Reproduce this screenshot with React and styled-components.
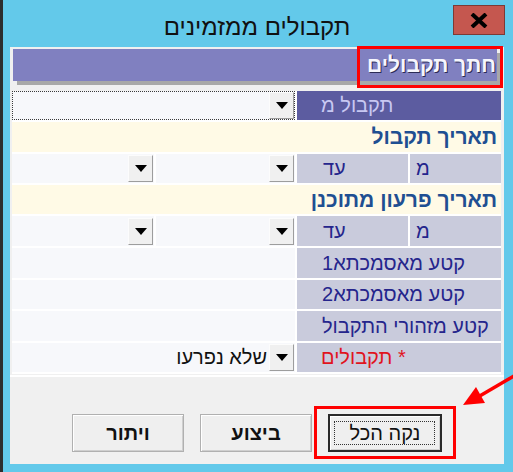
import React from "react";
import styled, { createGlobalStyle } from "styled-components";

const GlobalStyle = createGlobalStyle`
  html, body {
    margin: 0;
    padding: 0;
  }
  body {
    font-family: "Liberation Sans", "DejaVu Sans", sans-serif;
  }
`;

// window frame
const Window = styled.div`
  position: relative;
  width: 513px;
  height: 472px;
  box-sizing: border-box;
  background: #63c9ea;
  border-left: 3px solid #2d2d2d;
  padding: 0 9px 8px 7px;
  display: flex;
  flex-direction: column;
  direction: rtl;
  overflow: hidden;
`;

const TitleBar = styled.div`
  height: 47px;
  display: grid;
  grid-template-columns: 1fr auto 1fr;
  align-items: start;
`;

const CloseButton = styled.div`
  justify-self: start;
  margin: 5px -1px 0 0;
  width: 50px;
  height: 28px;
  background: #c5574f;
  border: 1px solid #7d3a35;
  display: flex;
  align-items: center;
  justify-content: center;
`;

const Title = styled.div`
  margin-top: 12px;
  font-size: 24px;
  line-height: 30px;
  color: #111;
  white-space: nowrap;
`;

const Client = styled.div`
  flex: 1;
  background: #f0f0f0;
  display: flex;
  flex-direction: column;
`;

const HeaderBar = styled.div`
  margin: 2px 7px 0 3px;
  height: 32px;
  background: #8080c0;
  box-shadow: 4px 4px 0 #a8a8a8;
  color: #f6f6fd;
  font-weight: bold;
  font-size: 21px;
  line-height: 32px;
  padding-right: 1px;
  text-shadow: 1px 1px 0 #2b2b55;
`;

const Form = styled.div`
  margin: 10px 3px 0 2px;
  display: grid;
  grid-template-rows: 31px 32px 31px 31px 32px 32px 31px 32px 31px;
  background: #fff;
`;

const Row = styled.div`
  display: flex;
  gap: 2px;
  padding-bottom: 2px;
  min-height: 0;
`;

const Label = styled.div`
  width: ${(p) => p.$w}px;
  flex-shrink: 0;
  box-sizing: border-box;
  background: ${(p) => (p.$tone === "purple" ? "#5c5ca0" : "#c9cbdc")};
  color: ${(p) => p.$color || (p.$tone === "purple" ? "#c8c8f2" : "#25258c")};
  font-size: 20px;
  padding-left: ${(p) => p.$pl}px;
  display: flex;
  align-items: center;
  justify-content: flex-end;
  white-space: nowrap;
`;

const SectionTitle = styled.div`
  flex: 1;
  background: #fffae6;
  color: #1f4f92;
  font-weight: bold;
  font-size: 21px;
  padding-right: 4px;
  display: flex;
  align-items: center;
`;

const Field = styled.div`
  width: ${(p) => (p.$w ? `${p.$w}px` : "auto")};
  flex: ${(p) => (p.$w ? "0 0 auto" : "1")};
  box-sizing: border-box;
  background: #f7f8fb;
  border: 1px dotted ${(p) => (p.$focus ? "#3a3a3a" : "transparent")};
  display: flex;
  align-items: center;
`;

const DropButton = styled.div`
  width: 25px;
  height: 27px;
  box-sizing: border-box;
  background: #f0f0f0;
  border: 1px solid;
  border-color: #fcfcfc #9d9d9d #9d9d9d #fcfcfc;
  display: flex;
  align-items: center;
  justify-content: center;

  &::after {
    content: "";
    border-left: 6px solid transparent;
    border-right: 6px solid transparent;
    border-top: 7px solid #000;
  }
`;

const FieldText = styled.span`
  padding-right: 2px;
  font-size: 20px;
  color: #111;
  white-space: nowrap;
`;

const Footer = styled.div`
  flex: 1;
  margin-top: 1px;
  border-top: 2px solid #fff;
  display: flex;
  align-items: flex-start;
  gap: 16px;
  padding: 37px 62px 0 0;
`;

const Button = styled.div`
  position: relative;
  width: ${(p) => (p.$default ? 114 : 112)}px;
  height: 38px;
  box-sizing: border-box;
  background: #efefef;
  border: ${(p) => (p.$default ? "2px solid #2a2a2a" : "1px solid #b0b0b0")};
  box-shadow: inset 1px 1px 0 #fff, inset -1px -1px 0 #cfcfcf;
  display: flex;
  align-items: center;
  justify-content: center;
  font-size: 20px;
  font-weight: ${(p) => (p.$default ? "normal" : "bold")};
  color: #111;

  &::after {
    content: "";
    display: ${(p) => (p.$default ? "block" : "none")};
    position: absolute;
    inset: 5px 5px 5px 4px;
    border: 1px dotted #333;
  }
`;

// annotation overlays
const Highlight = styled.div`
  position: absolute;
  left: ${(p) => p.$x}px;
  top: ${(p) => p.$y}px;
  width: ${(p) => p.$w}px;
  height: ${(p) => p.$h}px;
  box-sizing: border-box;
  border: 3px solid #ff0000;
  pointer-events: none;
`;

const ArrowLayer = styled.svg`
  position: absolute;
  left: -3px;
  top: 0;
  pointer-events: none;
`;

const DateRow = () => (
  <Row>
    <Label $tone="grey" $w={91} $pl={6}>
      מ
    </Label>
    <Label $tone="grey" $w={111} $pl={26}>
      עד
    </Label>
    <Field $w={139}>
      <DropButton />
    </Field>
    <Field>
      <DropButton />
    </Field>
  </Row>
);

const TextRow = ({ label }) => (
  <Row>
    <Label $tone="grey" $w={204} $pl={25}>
      {label}
    </Label>
    <Field />
  </Row>
);

const App = () => {
  return (
    <>
      <GlobalStyle />
      <Window>
        <TitleBar>
          <CloseButton>
            <svg width="18" height="15" viewBox="0 0 18 15">
              <path d="M2 1 L16 14 M16 1 L2 14" stroke="#000" strokeWidth="4" />
            </svg>
          </CloseButton>
          <Title>תקבולים ממזמינים</Title>
        </TitleBar>
        <Client>
          <HeaderBar>חתך תקבולים</HeaderBar>
          <Form>
            <Row>
              <Label $tone="purple" $w={204} $pl={24}>
                תקבול מ
              </Label>
              <Field $focus>
                <DropButton />
              </Field>
            </Row>
            <Row>
              <SectionTitle>תאריך תקבול</SectionTitle>
            </Row>
            <DateRow />
            <Row>
              <SectionTitle>תאריך פרעון מתוכנן</SectionTitle>
            </Row>
            <DateRow />
            <TextRow label="קטע מאסמכתא1" />
            <TextRow label="קטע מאסמכתא2" />
            <TextRow label="קטע מזהורי התקבול" />
            <Row>
              <Label $tone="grey" $w={204} $pl={24} $color="#e0141e">
                * תקבולים
              </Label>
              <Field>
                <DropButton />
                <FieldText>שלא נפרעו</FieldText>
              </Field>
            </Row>
          </Form>
          <Footer>
            <Button $default>נקה הכל</Button>
            <Button>ביצוע</Button>
            <Button>ויתור</Button>
          </Footer>
        </Client>
        <Highlight $x={354} $y={46} $w={146} $h={42} />
        <Highlight $x={311} $y={406} $w={142} $h={53} />
        <ArrowLayer width="513" height="472" viewBox="0 0 513 472">
          <line x1="514" y1="376" x2="478" y2="397" stroke="#ff0000" strokeWidth="3.5" />
          <polygon points="463,405 476,387 485,403" fill="#ff0000" />
        </ArrowLayer>
      </Window>
    </>
  );
};

export default App;
